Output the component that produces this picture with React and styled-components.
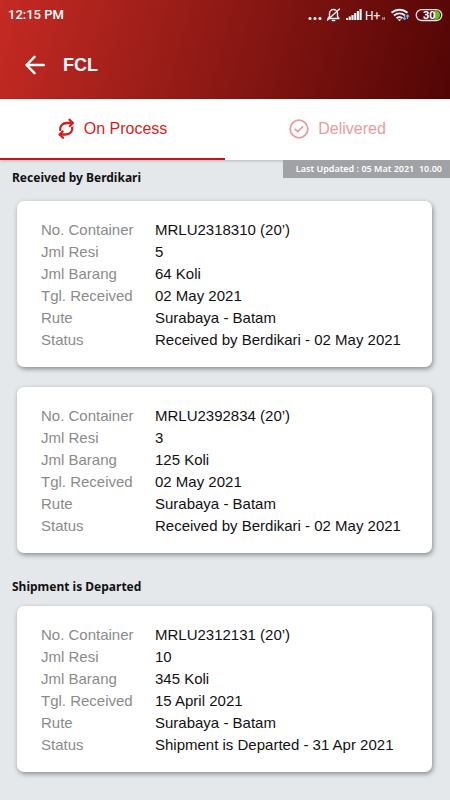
import { useState } from "react";
import styled, { createGlobalStyle } from "styled-components";

const GlobalStyle = createGlobalStyle`
  * {
    box-sizing: border-box;
  }

  body {
    margin: 0;
    background: #e4e8eb;
    font-family: "Liberation Sans", Arial, sans-serif;
  }
`;

const Page = styled.div`
  width: 100%;
  min-height: 100vh;
  background: #e4e8eb;
`;

const Header = styled.header`
  background: linear-gradient(105deg, #c52a23 0%, #8c1814 50%, #520505 100%);
  color: #fff;
`;

const StatusBar = styled.div`
  display: flex;
  align-items: center;
  justify-content: space-between;
  height: 30px;
  padding: 0 7px 0 8px;
`;

const Clock = styled.span`
  font: 500 13px/16px Roboto, sans-serif;
`;

const StatusIcons = styled.svg`
  display: block;
  width: 136px;
  height: 16px;
`;

const AppBar = styled.div`
  display: flex;
  align-items: center;
  gap: 18px;
  height: 69px;
  padding: 0 25px;
`;

const BackButton = styled.button`
  display: flex;
  padding: 0;
  border: 0;
  background: none;
  color: #fff;
`;

const Title = styled.h1`
  margin: 0;
  font-size: 18px;
  font-weight: 700;
  line-height: 22px;
`;

const Tabs = styled.nav`
  display: flex;
  background: #fff;
  box-shadow: 0 1px 3px rgba(0, 0, 0, 0.2);
`;

const Tab = styled.button`
  display: flex;
  flex: 1;
  align-items: center;
  justify-content: center;
  gap: 9px;
  height: 61px;
  padding: 0;
  border: 0;
  border-bottom: 2px solid ${({ $active }) => ($active ? "#c4161a" : "transparent")};
  background: none;
  color: ${({ $active }) => ($active ? "#d11f22" : "#eb9a9b")};
  font-family: inherit;
  font-size: 16px;
  line-height: 20px;
`;

const Content = styled.main`
  position: relative;
  padding-bottom: 12px;
`;

const LastUpdated = styled.div`
  position: absolute;
  top: 0;
  right: 0;
  padding: 0 8px 0 13px;
  background: #a0a2a6;
  color: #fff;
  font: 600 9px/18px "Noto Sans", sans-serif;
  white-space: pre;
`;

const SectionTitle = styled.h2`
  margin: 0 0 14px -5px;
  font: 700 12px/19px "Noto Sans", sans-serif;
  color: #111;
`;

const Section = styled.section`
  padding: 8px 18px 16px 17px;

  & + & ${SectionTitle} {
    margin-bottom: 10px;
  }
`;

const CardList = styled.div`
  display: flex;
  flex-direction: column;
  gap: 20px;
`;

const Card = styled.dl`
  display: grid;
  grid-template-columns: 114px 1fr;
  margin: 0;
  padding: 18px 16px 16px 24px;
  border-radius: 7px;
  background: #fff;
  box-shadow: 1px 2px 5px rgba(0, 0, 0, 0.4);
  font-size: 15px;
  line-height: 22px;
`;

const Label = styled.dt`
  color: #8b8b8b;
`;

const Value = styled.dd`
  margin: 0;
  color: #111;
`;

const SECTIONS = [
  {
    title: "Received by Berdikari",
    items: [
      {
        container: "MRLU2318310 (20’)",
        resi: "5",
        barang: "64 Koli",
        received: "02 May 2021",
        status: "Received by Berdikari - 02 May 2021",
      },
      {
        container: "MRLU2392834 (20’)",
        resi: "3",
        barang: "125 Koli",
        received: "02 May 2021",
        status: "Received by Berdikari - 02 May 2021",
      },
    ],
  },
  {
    title: "Shipment is Departed",
    items: [
      {
        container: "MRLU2312131 (20’)",
        resi: "10",
        barang: "345 Koli",
        received: "15 April 2021",
        status: "Shipment is Departed - 31 Apr 2021",
      },
    ],
  },
];

const DeviceStatus = () => (
  <StatusIcons viewBox="0 0 136 16" fill="none" aria-label="Device status">
    <g fill="#fff">
      <circle cx="3" cy="11.500" r="1.500" />
      <circle cx="8" cy="11.500" r="1.500" />
      <circle cx="13" cy="11.500" r="1.500" />
    </g>
    {/* muted bell */}
    <g stroke="#e4f1f5" strokeWidth="1.4" strokeLinecap="round" strokeLinejoin="round">
      <path d="M21 11.500h11l-1.500-2V6.500a4 4 0 0 0-8 0v3z" />
      <path d="M25.300 13.500h2.500M20.500 13 32.500 2" />
    </g>
    {/* signal */}
    <g fill="#dff3f8">
      <rect x="39" y="11" width="2.200" height="2" />
      <rect x="41.700" y="9.500" width="2.200" height="3.500" />
      <rect x="44.400" y="8" width="2.200" height="5" />
      <rect x="47.100" y="6" width="2.200" height="7" />
      <rect x="49.800" y="4" width="2.200" height="9" />
      <rect x="52.500" y="2" width="2.200" height="11" />
    </g>
    <text x="58" y="12.500" fill="#fff" fontFamily="Roboto" fontSize="12">
      H+
    </text>
    <path d="M75.500 10v3M75.500 13l2-3M77.500 10v3" stroke="#a9a3b0" strokeWidth=".8" />
    {/* wifi */}
    <g stroke="#d8f1fa" strokeWidth="2">
      <path d="M84.500 5.800c4.800-4.200 11.200-4.200 16 0" />
      <path d="M87 8.600c3.300-2.800 7.700-2.800 11 0" />
      <path d="M89.500 11.300c1.800-1.500 4.200-1.500 6 0" />
    </g>
    <path d="m92.500 14.200-2-2h4z" fill="#d8f1fa" />
    <path d="M97.500 8.500v4m-1.500-1.500 1.500 1.500L99 11M100.500 12V8M99 9.500l1.500-1.500 1.500 1.500" stroke="#6db4e4" strokeWidth="1.200" />
    {/* battery */}
    <path d="M127.500 3.500h1a4.500 4.500 0 0 1 0 9.200h-1z" fill="#54c32f" />
    <rect x="109.200" y="2.700" width="25.600" height="10.800" rx="5.400" stroke="#e3e6e8" strokeWidth="1.300" />
    <text x="116" y="12" fill="#fff" fontFamily="Roboto" fontSize="11" fontWeight="700">
      30
    </text>
  </StatusIcons>
);

const BackIcon = () => (
  <svg width="20" height="20" viewBox="0 0 20 20" fill="none" stroke="currentColor" strokeWidth="2.400" strokeLinecap="round" strokeLinejoin="round">
    <path d="M18.800 10H2M9.500 1.800 1.500 10l8 8.200" />
  </svg>
);

const ProcessIcon = () => (
  <svg width="17" height="22" viewBox="0 0 17 22" fill="none" stroke="currentColor" strokeWidth="2.300">
    <path d="M2.200 12.800C1.600 7.800 4.600 5 9 5h5" />
    <path d="M14.300 8.700C14.900 13.700 11.900 16.500 7.500 16.500h-5" />
    <g strokeLinecap="round" strokeLinejoin="round">
      <path d="M11.500 1.800 15 5l-3.200 3" />
      <path d="M5 19.700 1.500 16.500l3.200-3" />
    </g>
  </svg>
);

const DeliveredIcon = () => (
  <svg width="20" height="20" viewBox="0 0 20 20" fill="none" stroke="currentColor" strokeWidth="1.800" strokeLinecap="round" strokeLinejoin="round">
    <circle cx="10" cy="10" r="8.800" />
    <path d="m6.200 10.300 2.500 2.300 4.800-4.700" />
  </svg>
);

const ShipmentCard = ({ item }) => (
  <Card>
    <Label>No. Container</Label>
    <Value>{item.container}</Value>
    <Label>Jml Resi</Label>
    <Value>{item.resi}</Value>
    <Label>Jml Barang</Label>
    <Value>{item.barang}</Value>
    <Label>Tgl. Received</Label>
    <Value>{item.received}</Value>
    <Label>Rute</Label>
    <Value>Surabaya - Batam</Value>
    <Label>Status</Label>
    <Value>{item.status}</Value>
  </Card>
);

const App = () => {
  const [tab, setTab] = useState("process");

  return (
    <Page>
      <GlobalStyle />
      <Header>
        <StatusBar>
          <Clock>12:15 PM</Clock>
          <DeviceStatus />
        </StatusBar>
        <AppBar>
          <BackButton aria-label="Back">
            <BackIcon />
          </BackButton>
          <Title>FCL</Title>
        </AppBar>
      </Header>

      <Tabs>
        <Tab $active={tab === "process"} onClick={() => setTab("process")}>
          <ProcessIcon />
          On Process
        </Tab>
        <Tab $active={tab === "delivered"} onClick={() => setTab("delivered")}>
          <DeliveredIcon />
          Delivered
        </Tab>
      </Tabs>

      <Content>
        <LastUpdated>{"Last Updated : 05 Mat 2021  10.00"}</LastUpdated>
        {SECTIONS.map((section) => (
          <Section key={section.title}>
            <SectionTitle>{section.title}</SectionTitle>
            <CardList>
              {section.items.map((item) => (
                <ShipmentCard key={item.container} item={item} />
              ))}
            </CardList>
          </Section>
        ))}
      </Content>
    </Page>
  );
};

export default App;
